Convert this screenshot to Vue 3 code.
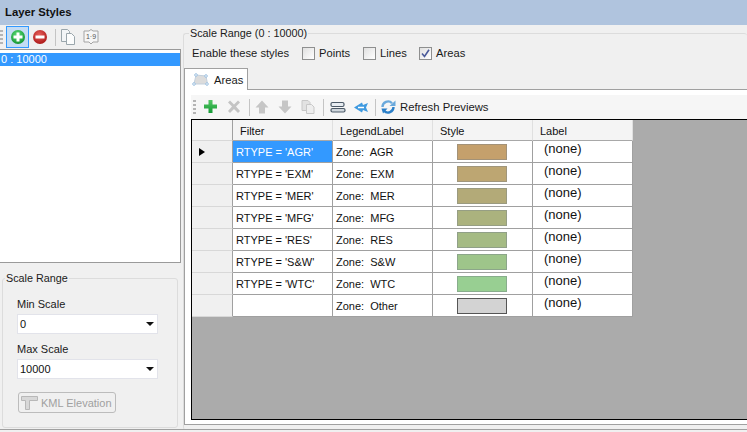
<script setup>
const rows = [
  { f: "RTYPE = 'AGR'", l: 'Zone:  AGR', c: '#c5a06c', b: '#a39278' },
  { f: "RTYPE = 'EXM'", l: 'Zone:  EXM', c: '#bda672', b: '#a0967c' },
  { f: "RTYPE = 'MER'", l: 'Zone:  MER', c: '#b3aa78', b: '#9a9a80' },
  { f: "RTYPE = 'MFG'", l: 'Zone:  MFG', c: '#abb27e', b: '#969e84' },
  { f: "RTYPE = 'RES'", l: 'Zone:  RES', c: '#a5bb84', b: '#90a088' },
  { f: "RTYPE = 'S&W'", l: 'Zone:  S&W', c: '#9ec58a', b: '#8ca68a' },
  { f: "RTYPE = 'WTC'", l: 'Zone:  WTC', c: '#98cf92', b: '#88ad8c' },
  { f: '', l: 'Zone:  Other', c: '#d3d3d3', b: '#555' },
]
</script>

<template>
  <div class="app">
    <header class="title">Layer Styles</header>
    <div class="main">
      <aside class="left">
        <div class="toolbar ltb">
          <span class="grip"></span>
          <span class="btn on">
            <svg width="18" height="18" viewBox="0 0 18 18"><defs><radialGradient id="g1" cx=".45" cy=".35" r=".7"><stop offset="0" stop-color="#5fe07a"/><stop offset="1" stop-color="#0e8f2c"/></radialGradient></defs><circle cx="9" cy="9" r="7" fill="url(#g1)"/><path d="M7.500 4.500h3v3h3v3h-3v3h-3v-3h-3v-3h3z" fill="#fff"/></svg>
          </span>
          <span class="btn">
            <svg width="18" height="18" viewBox="0 0 18 18"><defs><radialGradient id="r1" cx=".45" cy=".35" r=".7"><stop offset="0" stop-color="#e8605c"/><stop offset="1" stop-color="#a81414"/></radialGradient></defs><circle cx="9" cy="9" r="7" fill="url(#r1)"/><rect x="4.500" y="7.500" width="9" height="3" fill="#fff"/></svg>
          </span>
          <span class="sep"></span>
          <span class="btn">
            <svg width="18" height="18" viewBox="0 0 18 18"><path d="M2.500 1.500h6l2 2v10h-8z" fill="#f2f5f7" stroke="#9aa6ac"/><path d="M7.500 5.500h5l3 3v8h-8z" fill="#fbfcfc" stroke="#9aa6ac"/></svg>
          </span>
          <span class="btn wide">
            <svg width="20" height="18" viewBox="0 0 20 18"><path d="M3 3h5l2-1.500 2 1.500h5v11h-5l-2 2-2-2h-5z" fill="#f6f6f6" stroke="#a4a4a4"/><text x="10" y="11" font-size="7" text-anchor="middle" fill="#555" font-family="Liberation Sans">1·9</text></svg>
          </span>
        </div>
        <div class="list"><div class="sel">0 : 10000</div></div>
        <fieldset class="group scale">
          <legend>Scale Range</legend>
          <label class="flabel">Min Scale</label>
          <div class="combo"><span>0</span><i></i></div>
          <label class="flabel second">Max Scale</label>
          <div class="combo"><span>10000</span><i></i></div>
          <div class="kml">
            <svg width="19" height="17" viewBox="0 0 19 17"><path d="M1.500 2.500h16v4H9.500v9h-4v-9h-4z" fill="#d8d8d8" stroke="#b8b8b8"/></svg>
            <span>KML Elevation</span>
          </div>
        </fieldset>
      </aside>

      <section class="right">
        <fieldset class="group range">
          <legend>Scale Range (0 : 10000)</legend>
          <div class="enable">
            <span class="en-label">Enable these styles</span>
            <span class="chk pts"><i class="box"></i>Points</span>
            <span class="chk lns"><i class="box"></i>Lines</span>
            <span class="chk"><i class="box checked"><svg width="9" height="9" viewBox="0 0 9 9"><path d="M1 4.500l2.500 3L8 .8" fill="none" stroke="#4a5a9a" stroke-width="1.600"/></svg></i>Areas</span>
          </div>
          <div class="tabs">
            <div class="tab">
              <svg width="17" height="14" viewBox="0 0 17 14"><path d="M2 11l2-9 10 1 1.500 8z" fill="#dcdcdc" stroke="#c4d0dc"/><circle cx="4" cy="2" r="1.300" fill="#fff" stroke="#9cc0e0"/><circle cx="14" cy="3" r="1.300" fill="#fff" stroke="#9cc0e0"/><circle cx="2" cy="11" r="1.300" fill="#fff" stroke="#9cc0e0"/><circle cx="15" cy="11" r="1.300" fill="#fff" stroke="#9cc0e0"/></svg>
              Areas
            </div>
          </div>
          <div class="tabpage">
            <div class="toolbar gtb">
              <span class="grip"></span>
              <span class="ic"><svg width="16" height="16" viewBox="0 0 16 16"><defs><linearGradient id="pg" x1="0" y1="0" x2="0" y2="1"><stop offset="0" stop-color="#55c765"/><stop offset="1" stop-color="#149a34"/></linearGradient></defs><path d="M5.500 1h4v4.500H14v4H9.500V14h-4V9.500H1v-4h4.500z" fill="url(#pg)"/></svg></span>
              <span class="ic"><svg width="16" height="16" viewBox="0 0 16 16"><path d="M2 3.500L4 1.500l4 4 4-4 2 2-4 4 4 4.500-2 2-4-4-4 4-2-2 4-4.500z" fill="#c4c4c4"/></svg></span>
              <span class="sep"></span>
              <span class="ic"><svg width="16" height="16" viewBox="0 0 16 16"><path d="M8 1.500l6.500 7H11v6H5v-6H1.500z" fill="#c6c6c6"/></svg></span>
              <span class="ic"><svg width="16" height="16" viewBox="0 0 16 16"><path d="M8 14.500l6.500-7H11v-6H5v6H1.500z" fill="#c6c6c6"/></svg></span>
              <span class="ic"><svg width="16" height="16" viewBox="0 0 16 16"><path d="M2 1.500h6l2 2v8H2z" fill="#e2e2e2" stroke="#c8c8c8"/><path d="M6.500 5.500h5l2.500 2.500v6.500H6.500z" fill="#eee" stroke="#c8c8c8"/></svg></span>
              <span class="sep b"></span>
              <span class="ic"><svg width="16" height="16" viewBox="0 0 16 16"><rect x="1" y="3.500" width="13" height="4" rx="1.500" fill="#e8edf2" stroke="#4c5a68" stroke-width="1.200"/><rect x="1" y="9.500" width="14" height="3.500" rx="1.500" fill="#cfd6dc" stroke="#4c5a68" stroke-width="1.200"/></svg></span>
              <span class="ic"><svg width="17" height="16" viewBox="0 0 17 16"><path d="M1 8.500l8-5 1 2.500 5-2-2 4.500 2 4.500-5-2-1 2.500z" fill="#3f9ae0"/><path d="M5 8.500h6" stroke="#fff" stroke-width="1.500"/></svg></span>
              <span class="sep c"></span>
              <span class="refresh">
                <svg width="16" height="16" viewBox="0 0 16 16"><path d="M2.500 8a5.500 5.500 0 0 1 9.500-3.800" fill="none" stroke="#6aa9dc" stroke-width="2.400"/><path d="M13.500 8a5.500 5.500 0 0 1-9.500 3.800" fill="none" stroke="#2b7fc8" stroke-width="2.400"/><path d="M9.500 7h6V1.500z" fill="#6aa9dc"/><path d="M1.500 9.500h6l-4.500 5z" fill="#2b7fc8"/></svg>
                Refresh Previews
              </span>
            </div>
            <div class="grid">
              <div class="tbl">
                <div class="tr head">
                  <div class="rh"></div>
                  <div class="td">Filter</div>
                  <div class="td">LegendLabel</div>
                  <div class="td">Style</div>
                  <div class="td">Label</div>
                </div>
                <div v-for="(r, i) in rows" :key="i" class="tr">
                  <div class="rh"><i v-if="i === 0" class="arrow"></i></div>
                  <div class="td filter" :class="{ cur: i === 0 }">{{ r.f }}</div>
                  <div class="td legend">{{ r.l }}</div>
                  <div class="td style"><span class="sw" :style="{ background: r.c, borderColor: r.b }"></span></div>
                  <div class="td lab">(none)</div>
                </div>
              </div>
            </div>
          </div>
        </fieldset>
      </section>
    </div>
    <div class="foot"></div>
  </div>
</template>

<style>
html, body { margin: 0; padding: 0; }
</style>

<style scoped>
.app {
  width: 747px; height: 432px; overflow: hidden; background: #f0f0f0;
  font-family: "Liberation Sans", Arial, sans-serif; font-size: 11px; color: #1a1a1a;
  display: flex; flex-direction: column;
}
.title {
  height: 25px; flex: none; background: #b0c4de; font-weight: bold; font-size: 11.3px;
  line-height: 24px; padding-left: 5px; color: #111;
}
.main { flex: 1; display: flex; min-height: 0; }
.left { width: 181px; flex: none; display: flex; flex-direction: column; }
.toolbar { display: flex; align-items: center; }
.ltb { height: 24px; }
.grip { width: 3px; height: 15px; margin-right: 3px; background: repeating-linear-gradient(#b4b4b4 0 2px, transparent 2px 4px); flex: none; }
.btn { width: 22px; height: 22px; display: flex; align-items: center; justify-content: center; box-sizing: border-box; flex: none; }
.btn.on { width: 23px; background: #c4dcf4; border: 1px solid #3399ff; }
.btn.wide { width: 24px; }
.sep { width: 1px; height: 17px; background: #c4c4c4; margin: 0 1px 0 4px; flex: none; }
.list { height: 214px; flex: none; background: #fff; border: 1px solid #9a9a9a; border-left: none; box-sizing: border-box; padding-top: 3px; }
.sel { background: #3399ff; color: #fff; height: 13px; line-height: 13px; padding-left: 1px; }
.group { border: 1px solid #dcdcdc; border-radius: 3px; margin: 0; min-width: 0; box-sizing: border-box; }
.group legend { padding: 0 1px; font-size: 10.8px; line-height: 14px; }
.scale { margin: 8px 3px 0 2px; padding: 0 0 0 14px; height: 157px; }
.scale legend { margin-left: -12px; }
.flabel { display: block; margin-top: 12px; line-height: 14px; }
.flabel.second { margin-top: 8px; }
.combo {
  width: 141px; height: 20px; background: #fff; border: 1px solid #e2e3ea; margin-top: 3px; box-sizing: border-box;
  display: flex; align-items: center; justify-content: space-between; padding: 0 3px 0 2px;
  color: #111;
}
.combo i { width: 0; height: 0; border: 4px solid transparent; border-top: 4px solid #111; border-bottom: 0; }
.kml {
  margin-top: 13px; margin-left: 1px; width: 98px; height: 21px; border: 1px solid #bcbcbc; border-radius: 3px; box-sizing: border-box;
  display: flex; align-items: center; gap: 2px; color: #a0a0a0; padding-left: 1px; background: #f0f0f0; white-space: nowrap;
}
.right { flex: 1; min-width: 0; padding: 0 0 0 2px; }
.range { height: 404px; padding: 0; border-right: none; margin-top: 1px; border-bottom: none; }
.range legend { margin-left: 5px; }
.enable { height: 20px; margin-top: 3px; display: flex; align-items: center; padding-left: 8px; font-size: 11.2px; }
.en-label { width: 110px; flex: none; }
.chk { display: flex; align-items: center; gap: 4px; }
.chk.pts { width: 61px; }
.chk.lns { width: 56px; }
.box { width: 11px; height: 11px; border: 1px solid #8e8f8f; background: linear-gradient(135deg, #e0e0e0, #fff); display: inline-flex; align-items: center; justify-content: center; }
.tabs { margin-top: 5px; height: 21px; }
.tab {
  width: 64px; box-sizing: border-box; background: #fff; border: 1px solid #a0a0a0; border-bottom: none;
  display: flex; align-items: center; gap: 5px; padding-left: 7px; position: relative; z-index: 1; height: 22px; font-size: 11.2px;
}
.tabpage { border: 1px solid #a0a0a0; border-right: none; background: #fff; height: 336px; padding: 5px 0 0 6px; box-sizing: border-box; }
.gtb { height: 24px; background: #f6f6f6; gap: 3px; }
.gtb .grip { margin: 0 2px 0 2px; }
.gtb .sep { margin: 0 -1px 0 2px; }
.gtb .sep.b { margin-right: 1px; }
.gtb .sep.c { margin: 0 -1px 0 1px; }
.ic { width: 20px; height: 20px; display: flex; align-items: center; justify-content: center; flex: none; }
.refresh { display: flex; align-items: center; gap: 4px; color: #1a1a1a; font-size: 11.3px; margin-left: 2px; }
.grid { height: 301px; background: #ababab; border: 1px solid #000; border-right: none; box-sizing: border-box; }
.tbl { width: 441px; }
.tr { display: flex; height: 22px; }
.tr.head { height: 21px; }
.rh { width: 41px; flex: none; box-sizing: border-box; background: #f0f0f0; border-right: 1px solid #a0a0a0; border-bottom: 1px solid #d8d8d8; position: relative; }
.td { width: 100px; flex: none; box-sizing: border-box; background: #fff; border-right: 1px solid #a0a0a0; border-bottom: 1px solid #a0a0a0; padding-left: 3px; line-height: 22px; white-space: pre; overflow: hidden; color: #111; }
.head .td { background: #f4f4f4; border-right: 1px solid #e0e0e0; border-bottom: 1px solid #a8a8a8; padding-left: 7px; line-height: 22px; }
.head .rh { background: #f4f4f4; }
.td.cur { background: #3399ff; color: #fff; }
.style { display: flex; align-items: center; padding: 0 0 0 24px; }
.sw { width: 50px; height: 16px; box-sizing: border-box; border: 1px solid; display: block; }
.lab { padding-left: 11px; line-height: 16px; font-size: 13px; }
.arrow { position: absolute; left: 7px; top: 7px; width: 0; height: 0; border: 4px solid transparent; border-left: 6px solid #000; border-right: 0; }
.foot { height: 3px; flex: none; border-top: 1px solid #a0a0a0; box-sizing: border-box; }
</style>
